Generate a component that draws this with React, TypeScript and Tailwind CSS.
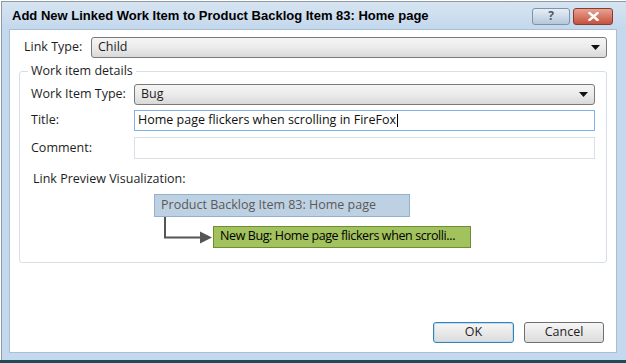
import React from "react";

const Caret = () => (
  <svg width="9" height="5" viewBox="0 0 9 5" className="shrink-0">
    <path d="M0 0h9L4.5 5z" fill="#111" />
  </svg>
);

const Select = ({ value, className }: { value: string; className: string }) => (
  <div
    className={`flex h-[21px] items-center justify-between rounded-[3px] border border-[#7a7a7a] bg-gradient-to-b from-[#f5f5f5] via-[#ebebeb] to-[#d9d9d9] pl-[6px] pr-[6px] ${className}`}
  >
    <span>{value}</span>
    <Caret />
  </div>
);

export default function App() {
  return (
    <div
      className="flex h-[363px] w-[626px] flex-col overflow-hidden bg-white text-[12.5px] text-[#1e1e1e]"
      style={{ fontFamily: '"Open Sans", "Noto Sans", sans-serif' }}
    >
      <div className="ml-[1px] mt-[1px] flex flex-1 flex-col border-l border-t border-[#8e9aa6] bg-[#c4d9ee]">
        {/* Title bar */}
        <div className="flex h-[27px] items-center justify-between bg-gradient-to-b from-[#d6e4f1] to-[#c4d8ec] pl-[10px] pr-[13px]">
          <span
            className="text-[13px] font-bold text-black"
            style={{ fontFamily: '"Liberation Sans", Arial, sans-serif' }}
          >
            Add New Linked Work Item to Product Backlog Item 83: Home page
          </span>
          <div className="flex items-center gap-[3px] pt-[1px]">
            <div className="flex h-[17px] w-[38px] items-center justify-center rounded-[3px] border border-[#7f93a8] bg-gradient-to-b from-[#e6eef6] to-[#b6c8da] text-[12px] font-bold text-[#4a5a6a]">
              ?
            </div>
            <div className="flex h-[17px] w-[40px] items-center justify-center rounded-[3px] border border-[#8a3a30] bg-gradient-to-b from-[#e8a293] to-[#c4503a]">
              <svg width="11" height="9" viewBox="0 0 11 9">
                <path d="M1.5 1l8 7M9.5 1l-8 7" stroke="#fff" strokeWidth="2.4" strokeLinecap="square" />
              </svg>
            </div>
          </div>
        </div>

        {/* Client area */}
        <div className="ml-[7px] mr-[9px] flex flex-1 flex-col border border-[#a9bfd6] bg-white">
          <div className="flex items-center pl-[14px] pr-[9px] pt-[7px]">
            <span className="w-[67px]">Link Type:</span>
            <Select value="Child" className="flex-1" />
          </div>

          {/* Group box */}
          <div className="relative ml-[9px] mr-[9px] mt-[13px] h-[192px] rounded-[3px] border border-[#d5dfe5] px-[11px] pt-[12px]">
            <span className="absolute left-[8px] top-[-10px] bg-white px-[3px]">Work item details</span>
            <div className="flex flex-col gap-[5px]">
              <div className="flex items-center">
                <span className="w-[103px]">Work Item Type:</span>
                <Select value="Bug" className="flex-1" />
              </div>
              <div className="flex items-center">
                <span className="w-[103px]">Title:</span>
                <div className="flex h-[21px] flex-1 items-center border border-[#7eb4ea] pl-[3px] text-[#111]">
                  Home page flickers when scrolling in FireFox
                  <span className="ml-[1px] inline-block h-[13px] w-px bg-black" />
                </div>
              </div>
              <div className="flex items-center pt-[1px]">
                <span className="w-[103px]">Comment:</span>
                <div className="h-[22px] flex-1 border border-[#dbdfe6]" />
              </div>
            </div>

            <div className="pt-[11px]">
              <span className="ml-[2px]">Link Preview Visualization:</span>
            </div>

            {/* Preview */}
            <div className="ml-[123px] mt-[5px] flex flex-col">
              <div className="flex h-[23px] w-[256px] items-center border border-[#91b1cf] bg-[#bdd1e3] pl-[6px] text-[#5a5a5a]">
                Product Backlog Item 83: Home page
              </div>
              <div className="flex items-start">
                <svg width="50" height="32" viewBox="0 0 50 32" className="ml-[9px] shrink-0">
                  <path d="M2 0V20.5H38" stroke="#555" strokeWidth="2" fill="none" />
                  <path d="M37 14.5L49 20.5L37 26.5z" fill="#555" />
                </svg>
                <div className="mt-[9px] flex h-[22px] w-[258px] items-center border border-[#6e8d34] bg-[#a2c25d] pl-[6px] tracking-[-0.4px] text-black">
                  New Bug: Home page flickers when scrolli...
                </div>
              </div>
            </div>
          </div>

          <div className="flex flex-1 items-end justify-end gap-[10px] pb-[9px] pr-[12px]">
            <div className="flex h-[21px] w-[81px] items-center justify-center rounded-[3px] border border-[#3c7fb1] bg-gradient-to-b from-[#f6f6f6] to-[#dcdcdc] shadow-[inset_0_0_0_1px_#b8dcf5]">
              OK
            </div>
            <div className="flex h-[21px] w-[80px] items-center justify-center rounded-[3px] border border-[#707070] bg-gradient-to-b from-[#f6f6f6] to-[#dcdcdc]">
              Cancel
            </div>
          </div>
        </div>
        <div className="h-[7px]" />
      </div>
      <div className="h-[3px] bg-[#1f4a57]" />
    </div>
  );
}
